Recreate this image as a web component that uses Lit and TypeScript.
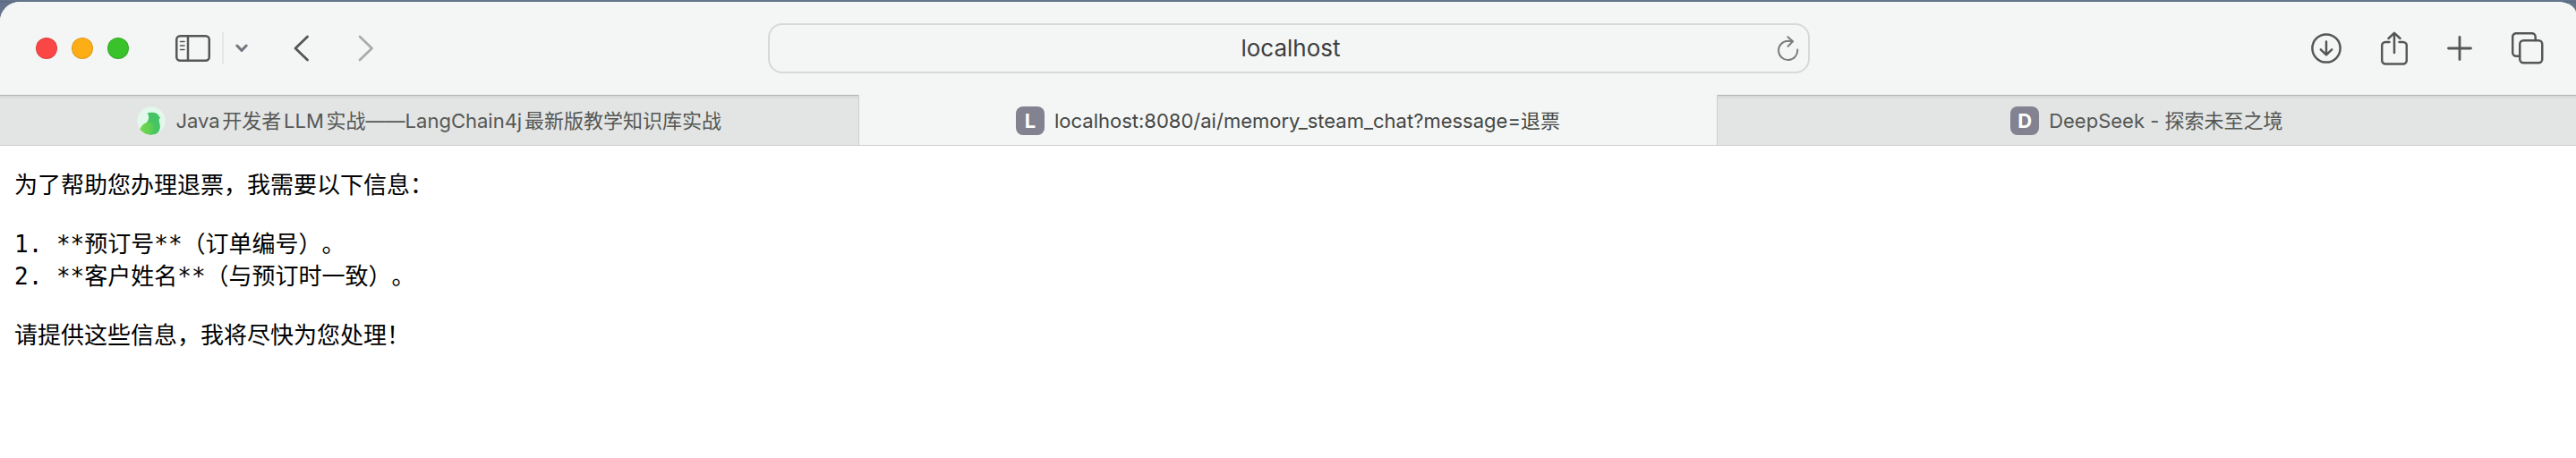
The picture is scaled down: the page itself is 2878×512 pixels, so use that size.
import { LitElement, html, css, svg } from "lit";
import { customElement, property } from "lit/decorators.js";

interface Tab {
  title: string;
  letter?: string;
  active?: boolean;
}

const TABS: Tab[] = [
  { title: "Java开发者LLM实战——LangChain4j最新版教学知识库实战" },
  { title: "localhost:8080/ai/memory_steam_chat?message=退票", letter: "L", active: true },
  { title: "DeepSeek - 探索未至之境", letter: "D" },
];

const ICONS = {
  sidebar: { w: 40, h: 30, body: svg`<rect x="1.25" y="1.25" width="36.5" height="27.5" rx="4"/><path d="M14 1.5v27"/><path stroke-width="1.6" d="M5.5 7.5h4.5M5.5 12h4.5M5.5 16.5h4.5"/>` },
  chevron: { w: 14, h: 10, body: svg`<path stroke-width="3" d="M1.8 2 7 7.4 12.2 2"/>` },
  back: { w: 18, h: 30, body: svg`<path stroke-width="2.8" d="M15.5 2 2 15l13.500 13"/>` },
  forward: { w: 18, h: 30, body: svg`<path stroke-width="2.8" d="M2 2l13.500 13L2 28"/>` },
  reload: { w: 24, h: 30, body: svg`<path stroke-width="2" d="M22.200 16.500A10.600 10.600 0 1 1 11.600 6.800L17 7.200"/><path stroke-width="2" d="M11.400 2.200 17 7.200l-5.400 5.600"/>` },
  download: { w: 34, h: 34, body: svg`<circle cx="17" cy="17" r="15.600"/><path d="M17 9.500v14.500M10.800 18.300 17 24.300l6.200-6"/>` },
  share: { w: 30, h: 38, body: svg`<path d="M9.500 12H5.200A4 4 0 0 0 1.200 16v16.500a4 4 0 0 0 4 4h19.600a4 4 0 0 0 4-4V16a4 4 0 0 0-4-4H20.500M15 24V2M8.500 8 15 1.800 21.500 8"/>` },
  plus: { w: 28, h: 28, body: svg`<path stroke-width="2.8" d="M14 1.500v25M1.500 14h25"/>` },
  overview: { w: 36, h: 36, body: svg`<rect x="9.250" y="9.250" width="25" height="25" rx="4"/><path d="M9 26.700H5.200a4 4 0 0 1-4-4V5.200a4 4 0 0 1 4-4h17.500a4 4 0 0 1 4 4V9"/>` },
};

const icon = (name: keyof typeof ICONS) => {
  const { w, h, body } = ICONS[name];
  return html`<svg width=${w} height=${h} viewBox="0 0 ${w} ${h}" fill="none" stroke="currentColor"
    stroke-width="2.5" stroke-linecap="round" stroke-linejoin="round" aria-hidden="true">${body}</svg>`;
};

@customElement("browser-toolbar")
class BrowserToolbar extends LitElement {
  static styles = css`
    :host {
      display: grid;
      grid-template-columns: minmax(0, 1fr) 40.5% minmax(0, 1fr);
      align-items: center;
      height: 104px;
      padding-left: 2px;
      color: #555655;
      background: #f4f6f5;
    }
    button {
      display: flex;
      padding: 0;
      border: 0;
      background: none;
      color: inherit;
    }
    svg { display: block; }
    .group, .lights { display: flex; align-items: center; }
    .start { padding-left: 38px; }
    .lights { gap: 16px; margin-right: 52px; }
    .light {
      width: 24px;
      height: 24px;
      border-radius: 50%;
      border: 1px solid #0000001f;
      box-sizing: border-box;
    }
    .close { background: #fb4646; }
    .minimize { background: #fdae16; }
    .maximize { background: #39c22a; }
    .divider { width: 2px; height: 36px; margin: 0 13px 0 12px; background: #e4e6e5; }
    .menu { color: #77757f; }
    .history { display: flex; gap: 54px; margin-left: 51px; }
    .disabled { color: #aaacab; }
    .end { justify-content: flex-end; gap: 44px; padding-right: 36px; }
    .field {
      display: flex;
      align-items: center;
      height: 56px;
      box-sizing: border-box;
      padding: 0 10px 0 38px;
      border: 2px solid #d7d9d8;
      border-radius: 16px;
    }
    .address {
      flex: 1;
      min-width: 0;
      padding: 0;
      border: 0;
      outline: 0;
      background: none;
      text-align: center;
      color: #3c3d3c;
      font: 26px/32px Inter, "Noto Sans CJK SC", sans-serif;
    }
    .reload { color: #7c7d7c; }
  `;

  render() {
    return html`
      <div class="group start">
        <div class="lights">
          <button class="light close" aria-label="关闭"></button>
          <button class="light minimize" aria-label="最小化"></button>
          <button class="light maximize" aria-label="缩放"></button>
        </div>
        <button aria-label="边栏">${icon("sidebar")}</button>
        <span class="divider"></span>
        <button class="menu" aria-label="标签页组">${icon("chevron")}</button>
        <div class="history">
          <button aria-label="后退">${icon("back")}</button>
          <button class="disabled" aria-label="前进" disabled>${icon("forward")}</button>
        </div>
      </div>
      <div class="field">
        <input class="address" type="text" aria-label="地址" .value=${"localhost"} />
        <button class="reload" aria-label="重新载入">${icon("reload")}</button>
      </div>
      <div class="group end">
        <button aria-label="下载">${icon("download")}</button>
        <button aria-label="共享">${icon("share")}</button>
        <button aria-label="新建标签页">${icon("plus")}</button>
        <button aria-label="标签页概览">${icon("overview")}</button>
      </div>
    `;
  }
}

@customElement("browser-tabs")
class BrowserTabs extends LitElement {
  static styles = css`
    :host { display: block; }
    .tabs {
      display: grid;
      grid-auto-flow: column;
      grid-auto-columns: minmax(0, 1fr);
      border-bottom: 1px solid #cdcfce;
    }
    .tab {
      display: flex;
      align-items: center;
      justify-content: center;
      gap: 11px;
      height: 56px;
      min-width: 0;
      padding: 2px 16px 0;
      border: 0;
      color: #555755;
      background: linear-gradient(#b3b5b4 1px, #d3d5d4 1px, #e3e5e4 5px);
      font: 22px/32px Inter, "Noto Sans CJK SC", sans-serif;
      text-autospace: normal;
    }
    .active {
      color: #444644;
      background: #f4f6f5;
      box-shadow: inset 1px 0 #cdcfce, inset -1px 0 #cdcfce;
    }
    .title {
      overflow: hidden;
      white-space: nowrap;
      text-overflow: ellipsis;
    }
    .badge {
      flex: none;
      width: 32px;
      height: 32px;
      border-radius: 8px;
      background: #828290;
      color: #fff;
      font-weight: 700;
    }
    .logo { flex: none; }
  `;

  @property({ attribute: false }) tabs: Tab[] = [];

  private logo() {
    return html`<svg class="logo" width="32" height="32" viewBox="0 0 32 32" aria-hidden="true">
      <defs>
        <linearGradient id="body" x1="0" y1="1" x2="1" y2="0">
          <stop offset="0" stop-color="#46c65c" /><stop offset="1" stop-color="#45c367" />
        </linearGradient>
        <linearGradient id="wing" x1="0" y1="0" x2="1" y2="0">
          <stop offset="0" stop-color="#78d94f" /><stop offset="1" stop-color="#55cb52" />
        </linearGradient>
        <clipPath id="disc"><circle cx="16" cy="16" r="15.700" /></clipPath>
      </defs>
      <circle cx="16" cy="16" r="15.700" fill="#e2f8ea" />
      <g clip-path="url(#disc)">
        <path fill="url(#body)" d="M11.500 7.500C14 6.500 20 6.200 22.500 8.200c1.600 1.200 2.100 2.200 2.300 3.200l1.500 1.200-1.700 1.900c-.2 2.500 1.600 5.500 1.200 9-.4 4-2.800 8.500-9.800 8.500-6 0-10.500-3-12.500-6.500 2-4 9.700-6.500 9.700-13.500 0-2-1-3.500-1.700-4.500z" />
        <path fill="url(#wing)" d="M3.200 25.500C5 21 9 18 13 17.500c3.500 0 5.800 2.500 5.800 6.500 0 3.200-1.300 6-3 8C9.500 31.700 5.500 29.500 3.200 25.500z" />
      </g>
    </svg>`;
  }

  render() {
    return html`<div class="tabs" role="tablist">
      ${this.tabs.map(
        (tab) => html`<button class="tab ${tab.active ? "active" : ""}" role="tab" aria-selected=${tab.active ? "true" : "false"}>
          ${tab.letter ? html`<span class="badge">${tab.letter}</span>` : this.logo()}
          <span class="title">${tab.title}</span>
        </button>`
      )}
    </div>`;
  }
}

@customElement("app-root")
class AppRoot extends LitElement {
  static styles = css`
    :host {
      display: block;
      min-height: 100vh;
      box-sizing: border-box;
      padding-top: 2px;
      background: linear-gradient(#6b7b90, #56677f 2px, #64748b 3px);
    }
    .window {
      min-height: calc(100vh - 2px);
      border-radius: 22px 21px 0 0 / 22px 13px 0 0;
      overflow: hidden;
      background: #fff;
    }
    .page {
      padding: 26px 16px;
      color: #000;
      font: 26px/36px "DejaVu Sans Mono", "Noto Sans CJK SC", monospace;
      text-spacing-trim: space-all;
    }
    .reply {
      margin: 0 0 30px;
      white-space: pre-wrap;
    }
  `;

  private reply = [
    "为了帮助您办理退票，我需要以下信息：",
    "1. **预订号**（订单编号）。\n2. **客户姓名**（与预订时一致）。",
    "请提供这些信息，我将尽快为您处理！",
  ];

  render() {
    return html`<div class="window">
      <browser-toolbar></browser-toolbar>
      <browser-tabs .tabs=${TABS}></browser-tabs>
      <main class="page">${this.reply.map((text) => html`<p class="reply" lang="zh-CN">${text}</p>`)}</main>
    </div>`;
  }
}
